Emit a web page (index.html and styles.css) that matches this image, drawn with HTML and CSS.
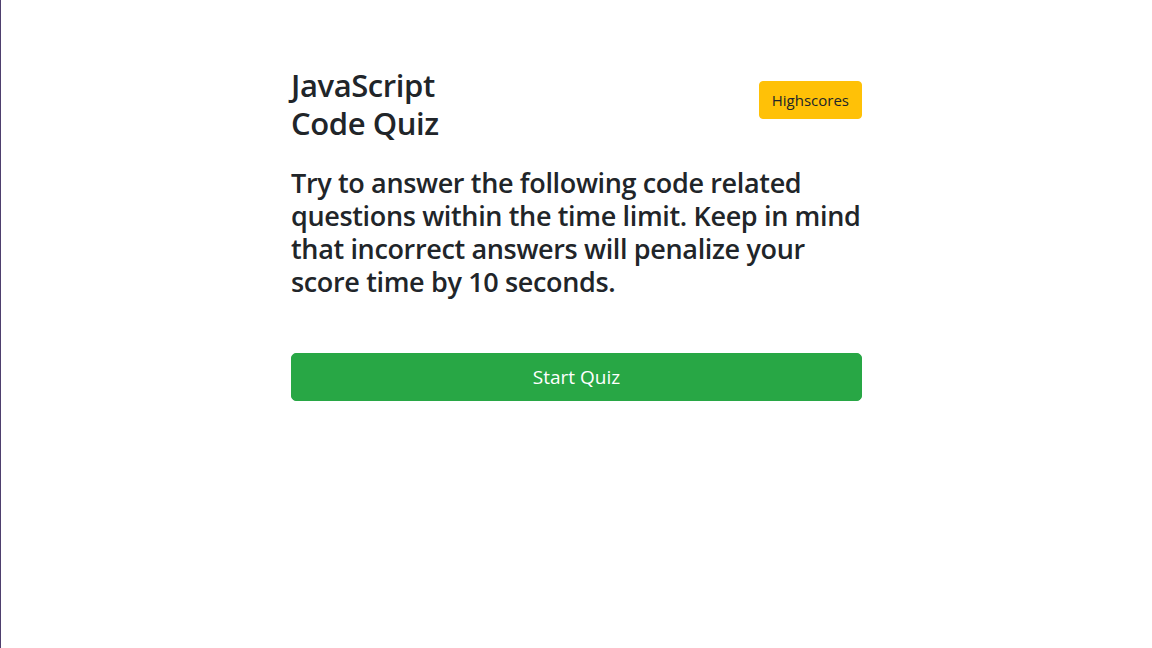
FILE: index.html
```html
<!DOCTYPE html>
<html lang="en">
<head>
<meta charset="utf-8">
<title>JavaScript Code Quiz</title>
<link rel="stylesheet" href="styles.css">
</head>
<body>
<div class="page">
  <main class="quiz">
    <header class="quiz-header">
      <h2 class="quiz-title">JavaScript<br>Code Quiz</h2>
      <button class="btn btn-warning">Highscores</button>
    </header>
    <h3 class="quiz-intro">Try to answer the following code related questions within the time limit. Keep in mind that incorrect answers will penalize your score time by 10 seconds.</h3>
    <button class="btn btn-success btn-lg btn-block">Start Quiz</button>
  </main>
</div>
</body>
</html>
```
FILE: styles.css
```css
* { box-sizing: border-box; }
html, body { margin: 0; padding: 0; height: 100%; }
body {
  font-family: "Open Sans", "Noto Sans", sans-serif;
  color: #212529;
  background: #fff;
}
.page {
  min-height: 100%;
  border-left: 1px solid #4e3f6e;
  display: flex;
  justify-content: center;
  padding-top: 66px;
}
.quiz {
  width: 571px;
  display: flex;
  flex-direction: column;
}
.quiz-header {
  display: flex;
  justify-content: space-between;
  align-items: flex-start;
}
.quiz-title {
  margin: 0;
  font-size: 31px;
  line-height: 38px;
  font-weight: 600;
  letter-spacing: -0.4px;
}
.quiz-intro {
  margin: 24px 0 0;
  font-size: 27px;
  line-height: 33px;
  font-weight: 600;
  letter-spacing: -0.35px;
}
.btn {
  font-family: inherit;
  border: 1px solid transparent;
  border-radius: 4px;
  cursor: pointer;
}
.btn-warning {
  margin-top: 15px;
  background: #ffc107;
  border-color: #ffc107;
  color: #212529;
  font-size: 15px;
  line-height: 24px;
  padding: 6px 12px;
}
.btn-success {
  background: #28a745;
  border-color: #28a745;
  color: #fff;
}
.btn-lg {
  font-size: 19px;
  line-height: 30px;
  padding: 8px 16px;
  border-radius: 5px;
}
.btn-block {
  width: 100%;
  margin-top: 55px;
}
```
